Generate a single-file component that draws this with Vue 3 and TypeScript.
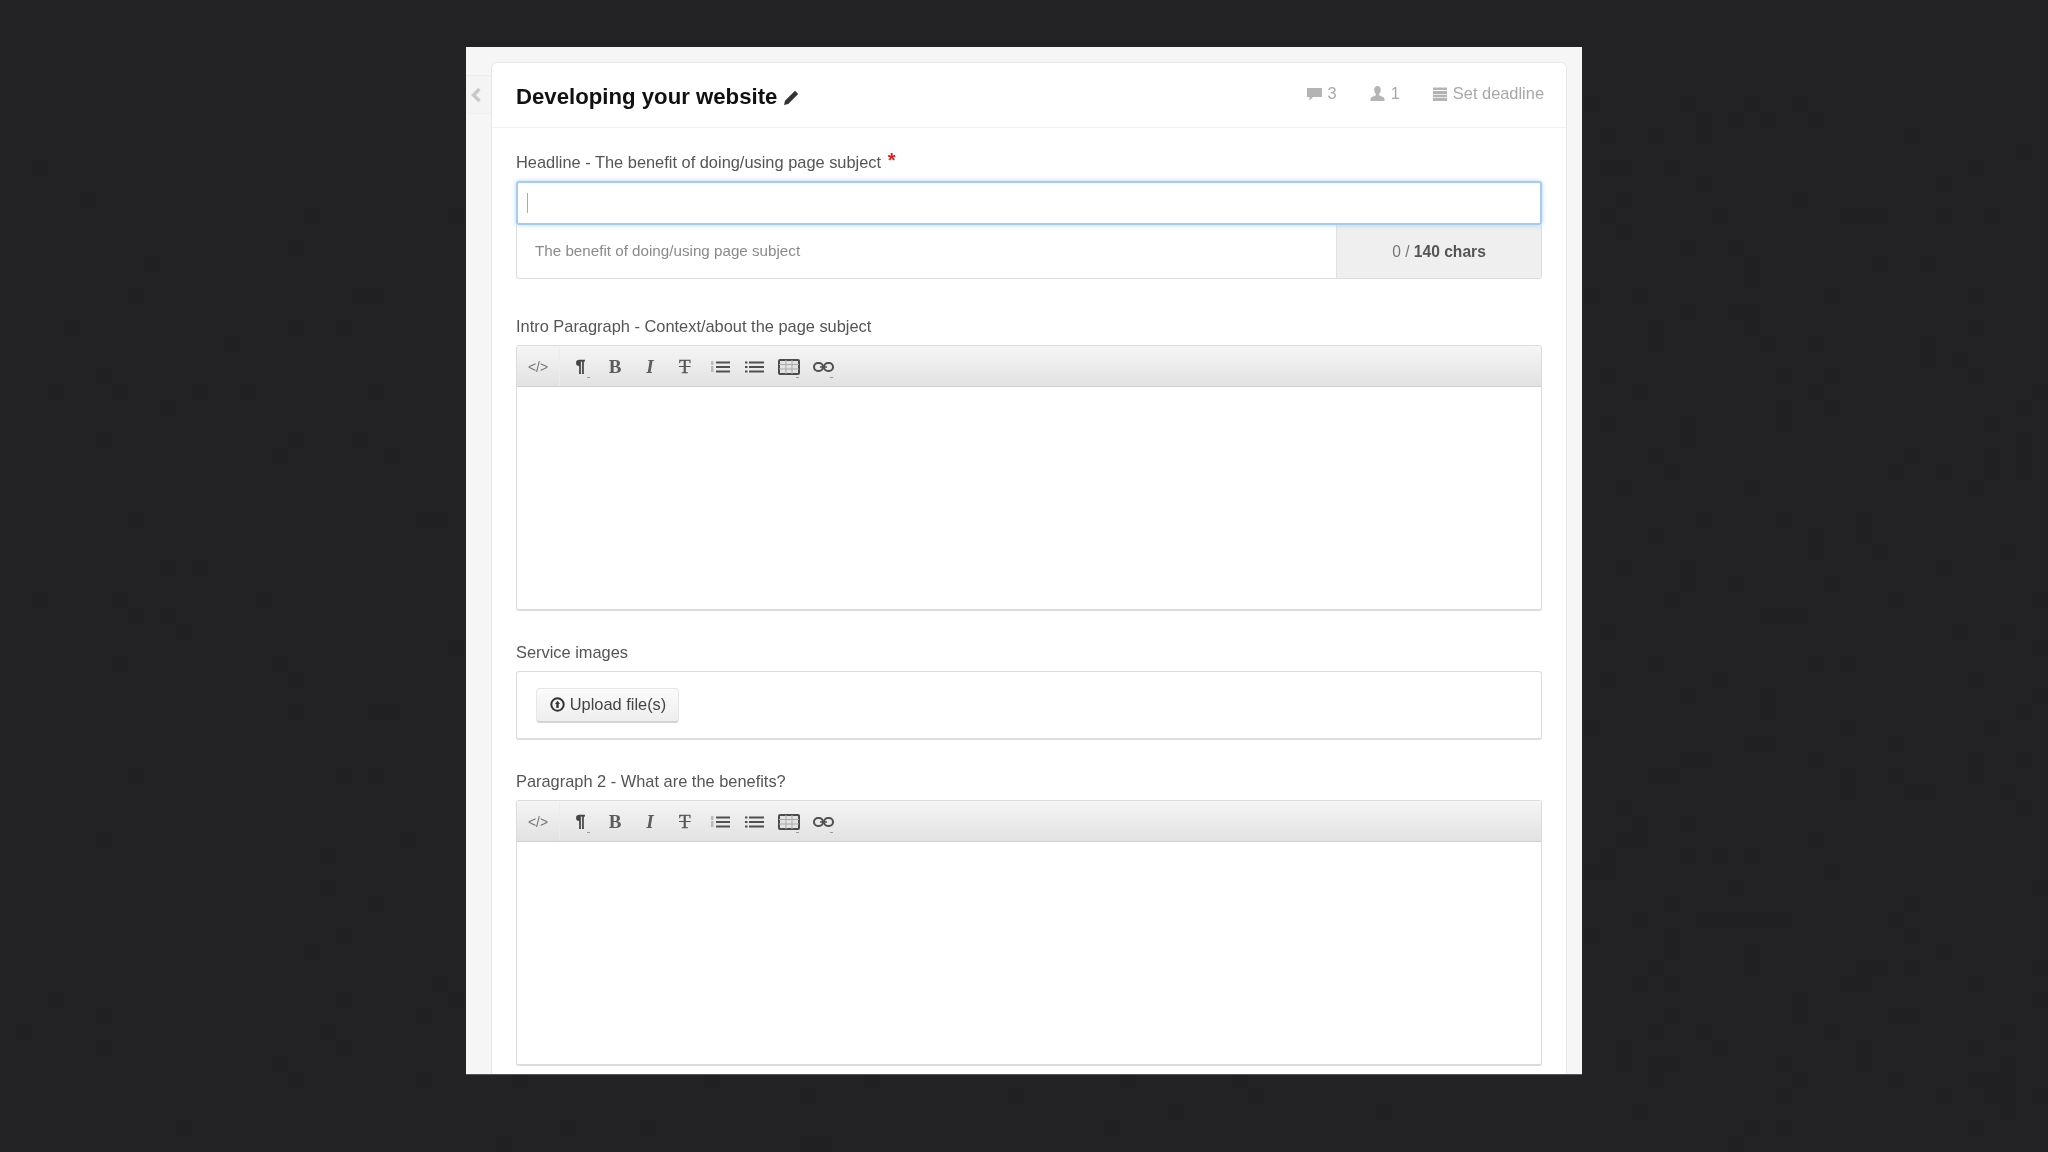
<template>
  <main class="stage">
    <svg class="texture" width="2048" height="1152" aria-hidden="true">
      <rect v-for="b in texture" :key="b.x + '-' + b.y" :x="b.x" :y="b.y" width="16" height="16" fill="#201f21" />
    </svg>
    <section class="panel">
      <aside class="rail">
        <div class="rail-tab">
          <svg width="12" height="16" viewBox="0 0 12 16"><path d="M9.500 2 3.500 8l6 6" fill="none" stroke="#c8c8c8" stroke-width="3.400" /></svg>
        </div>
      </aside>
      <div class="card">
        <header class="card-head">
          <h1 class="title">Developing your website</h1>
          <svg class="pencil" width="16" height="16" viewBox="0 0 16 16">
            <path d="M12 .8 15.200 4 5.200 14 1 15l1-4.200z" fill="#333" />
          </svg>
          <div class="meta">
            <span class="meta-item">
              <svg width="15" height="14" viewBox="0 0 15 14"><path d="M0 1h15v9H6l-3.500 3.500V10H0z" fill="#b4b4b4" /></svg>
              3
            </span>
            <span class="meta-item">
              <svg width="15" height="15" viewBox="0 0 15 15"><path d="M7.500 0C9.600 0 10.800 1.600 10.800 3.800S9.700 7.400 9 8.300c0 1 .7 1.400 2.200 2 1.700.7 3.300 1.200 3.300 2.700V15H.5v-2c0-1.500 1.600-2 3.300-2.700 1.500-.6 2.200-1 2.200-2C5.300 7.400 4.200 6 4.200 3.800S5.400 0 7.500 0z" fill="#b4b4b4" /></svg>
              1
            </span>
            <span class="meta-item">
              <svg width="14" height="15" viewBox="0 0 14 15"><path d="M0 1.500h14V4H0zM0 5h14v10H0z" fill="#b4b4b4" /><path d="M3.500 0v2M10.500 0v2M0 8.500h14M0 11.500h14" stroke="#e8e8e8" /></svg>
              Set deadline
            </span>
          </div>
        </header>

        <form class="fields" @submit.prevent>
          <div class="field first">
            <label class="label">Headline - The benefit of doing/using page subject <b class="req">*</b></label>
            <div class="fake-input"><span class="caret"></span></div>
            <div class="hint-row">
              <span class="hint">The benefit of doing/using page subject</span>
              <span class="count">0 / <b>140 chars</b></span>
            </div>
          </div>

          <div v-for="block in blocks" :key="block.label" class="field" :class="{ 'after-hint': block.afterHint }">
            <label class="label">{{ block.label }}</label>
            <div v-if="block.kind === 'editor'" class="editor">
              <div class="toolbar">
                <span class="tool code">&lt;/&gt;</span>
                <span class="tool para">¶<i class="drop"></i></span>
                <span class="tool bold">B</span>
                <span class="tool ital">I</span>
                <span class="tool strike">T</span>
                <span class="tool">
                  <svg width="20" height="12" viewBox="0 0 20 12">
                    <path d="M6 1.500h14M6 6h14M6 10.500h14" stroke="#505050" stroke-width="2.200" />
                    <path d="M1 1h2.500M1 3h2.500M1 6h2.500M1 8h2.500M1 10h2.500" stroke="#888" />
                  </svg>
                </span>
                <span class="tool">
                  <svg width="20" height="12" viewBox="0 0 20 12">
                    <path d="M5 1.500h15M5 6h15M5 10.500h15" stroke="#505050" stroke-width="2.200" />
                    <path d="M1 1.500h2.500M1 6h2.500M1 10.500h2.500" stroke="#505050" stroke-width="2.200" />
                  </svg>
                </span>
                <span class="tool">
                  <svg width="22" height="16" viewBox="0 0 22 16">
                    <rect x="1" y="1" width="20" height="14" fill="#e2e2e2" stroke="#4c4c4c" stroke-width="2" rx="1" />
                    <path d="M1 5.500h20M1 10h20M8 1v14M14 1v14" stroke="#aaa" />
                  </svg>
                  <i class="drop"></i>
                </span>
                <span class="tool">
                  <svg width="21" height="10" viewBox="0 0 21 10">
                    <rect x="1" y="1" width="9" height="8" rx="4" fill="none" stroke="#505050" stroke-width="2" />
                    <rect x="11" y="1" width="9" height="8" rx="4" fill="none" stroke="#505050" stroke-width="2" />
                    <path d="M7 5h7" stroke="#505050" stroke-width="1.500" />
                  </svg>
                  <i class="drop"></i>
                </span>
              </div>
            </div>
            <div v-else class="upload-box">
              <button type="button" class="upload">
                <svg width="15" height="15" viewBox="0 0 15 15">
                  <circle cx="7.500" cy="7.500" r="6.200" fill="none" stroke="#333" stroke-width="2" />
                  <path d="M7.500 3.800 10 7H8.700v4H6.300V7H5z" fill="#333" />
                </svg>
                Upload file(s)
              </button>
            </div>
          </div>
        </form>
      </div>
    </section>
  </main>
</template>

<script setup lang="ts">
interface Block {
  label: string;
  kind: "editor" | "upload";
  afterHint?: boolean;
}

const blocks: Block[] = [
  { label: "Intro Paragraph - Context/about the page subject", kind: "editor", afterHint: true },
  { label: "Service images", kind: "upload" },
  { label: "Paragraph 2 - What are the benefits?", kind: "editor" },
];

// the dark backdrop has faint compression blocks on a 16px grid, mostly on the right
const texture: { x: number; y: number }[] = [];
let seed = 73;
for (let y = 96; y < 1152; y += 16) {
  for (let x = 0; x < 2048; x += 16) {
    seed = (seed * 16807) % 2147483647;
    if (x > 448 && x < 1584 && y < 1072) continue;
    if (seed % 100 < (x > 1584 ? 12 : 4)) texture.push({ x, y });
  }
}
</script>

<style>
html,
body {
  margin: 0;
  background: #232224;
}
</style>

<style scoped>
.stage {
  position: relative;
  height: 1152px;
  box-sizing: border-box;
  padding-top: 47px;
  display: flex;
  justify-content: center;
  align-items: flex-start;
  overflow: hidden;
  background-color: #232224;
  font-family: "Liberation Sans", Arial, sans-serif;
}

.texture {
  position: absolute;
  left: 0;
  top: 0;
}

.panel {
  position: relative;
  width: 1116px;
  height: 1027px;
  display: flex;
  overflow: hidden;
  background: #f6f6f6;
  box-shadow: 0 1px 0 #555;
  filter: blur(0.7px);
}

.rail {
  width: 25px;
  flex: none;
  padding-top: 28px;
}

.rail-tab {
  height: 39px;
  display: flex;
  align-items: center;
  padding-left: 4px;
  box-sizing: border-box;
  background: #f4f4f4;
  border-top: 1px solid #ebebeb;
  border-bottom: 1px solid #f0f0f0;
}

.card {
  width: 1076px;
  flex: none;
  margin-top: 15px;
  box-sizing: border-box;
  background: #fff;
  border: 1px solid #e7e7e7;
  border-bottom: 0;
  border-radius: 6px 6px 0 0;
}

.card-head {
  height: 65px;
  box-sizing: border-box;
  padding: 4px 22px 0 24px;
  display: flex;
  align-items: center;
  border-bottom: 1px solid #f2f2f2;
}

.title {
  margin: 0;
  font-size: 22.200px;
  line-height: 30px;
  font-weight: 700;
  color: #111;
}

.pencil {
  margin-left: 6px;
  margin-top: 2px;
}

.meta {
  margin-left: auto;
  display: flex;
  gap: 33px;
  margin-top: -7px;
}

.meta-item {
  display: flex;
  align-items: center;
  gap: 6px;
  font-size: 16.400px;
  color: #a8a8a8;
}

.fields {
  padding: 0 24px;
}

.field {
  display: flex;
  flex-direction: column;
  padding-top: 32px;
}

.field.first {
  padding-top: 25px;
}

.field.after-hint {
  padding-top: 38px;
}

.label {
  height: 19px;
  margin-bottom: 9px;
  font-size: 16.400px;
  line-height: 19px;
  color: #555;
}

.req {
  margin-left: 2px;
  color: #e41e1e;
  font-size: 20px;
  line-height: 0;
  vertical-align: 1px;
}

.fake-input {
  height: 44px;
  box-sizing: border-box;
  padding: 10px;
  background: #fff;
  border: 2px solid #a4ccf1;
  border-radius: 3px;
  box-shadow: 0 0 5px rgba(130, 185, 240, 0.6);
  position: relative;
  z-index: 1;
}

.caret {
  display: block;
  width: 1px;
  height: 20px;
  margin-left: -1px;
  background: #aaa;
}

.hint-row {
  height: 54px;
  box-sizing: border-box;
  display: flex;
  border: 1px solid #dedede;
  border-top: 0;
  border-radius: 0 0 3px 3px;
}

.hint {
  flex: 1;
  padding: 17px 18px 0;
  font-size: 15.200px;
  color: #8a8a8a;
}

.count {
  width: 204px;
  text-align: center;
  padding-top: 18px;
  font-size: 15.600px;
  color: #777;
  background: #efefef;
  border-left: 1px solid #e2e2e2;
}

.count b {
  color: #555;
}

.editor,
.upload-box {
  box-sizing: border-box;
  border: 1px solid #dcdcdc;
  border-bottom-width: 2px;
  border-radius: 3px;
  background: #fff;
}

.editor {
  height: 266px;
}

.toolbar {
  height: 41px;
  box-sizing: border-box;
  padding-top: 2px;
  display: flex;
  align-items: center;
  background: linear-gradient(#f6f5f6, #e3e2e3);
  border-bottom: 1px solid #cfcfcf;
  color: #555;
}

.tool {
  width: 34.800px;
  height: 100%;
  display: flex;
  align-items: center;
  justify-content: center;
  position: relative;
  font-family: "Liberation Serif", serif;
  font-size: 19px;
}

.code {
  width: 42px;
  margin-right: 3px;
  font-family: "Liberation Sans", sans-serif;
  font-size: 14px;
  color: #777;
  border-right: 1px solid #ececec;
}

.para {
  font-family: "Liberation Sans", sans-serif;
  font-weight: 700;
  font-size: 17px;
  color: #444;
  -webkit-text-stroke: 0.6px #444;
}

.bold {
  font-weight: 700;
  color: #5c5c5c;
}

.ital {
  font-style: italic;
  font-weight: 700;
  color: #5c5c5c;
}

.strike {
  text-decoration: line-through;
  -webkit-text-stroke: 0.3px #555;
}

.drop {
  position: absolute;
  right: 8px;
  bottom: 8px;
  width: 3px;
  height: 1px;
  background: #999;
}

.upload-box {
  height: 69px;
  padding: 16px 19px;
}

.upload {
  height: 35px;
  width: 143px;
  padding: 0 0 2px 1px;
  display: flex;
  align-items: center;
  justify-content: center;
  gap: 5px;
  border: 1px solid #e6e6e6;
  border-bottom: 2px solid #d4d4d4;
  border-radius: 4px;
  background: linear-gradient(#fbfbfb, #eeeeee);
  font-family: "Liberation Sans", sans-serif;
  font-size: 16.400px;
  color: #444;
}
</style>
